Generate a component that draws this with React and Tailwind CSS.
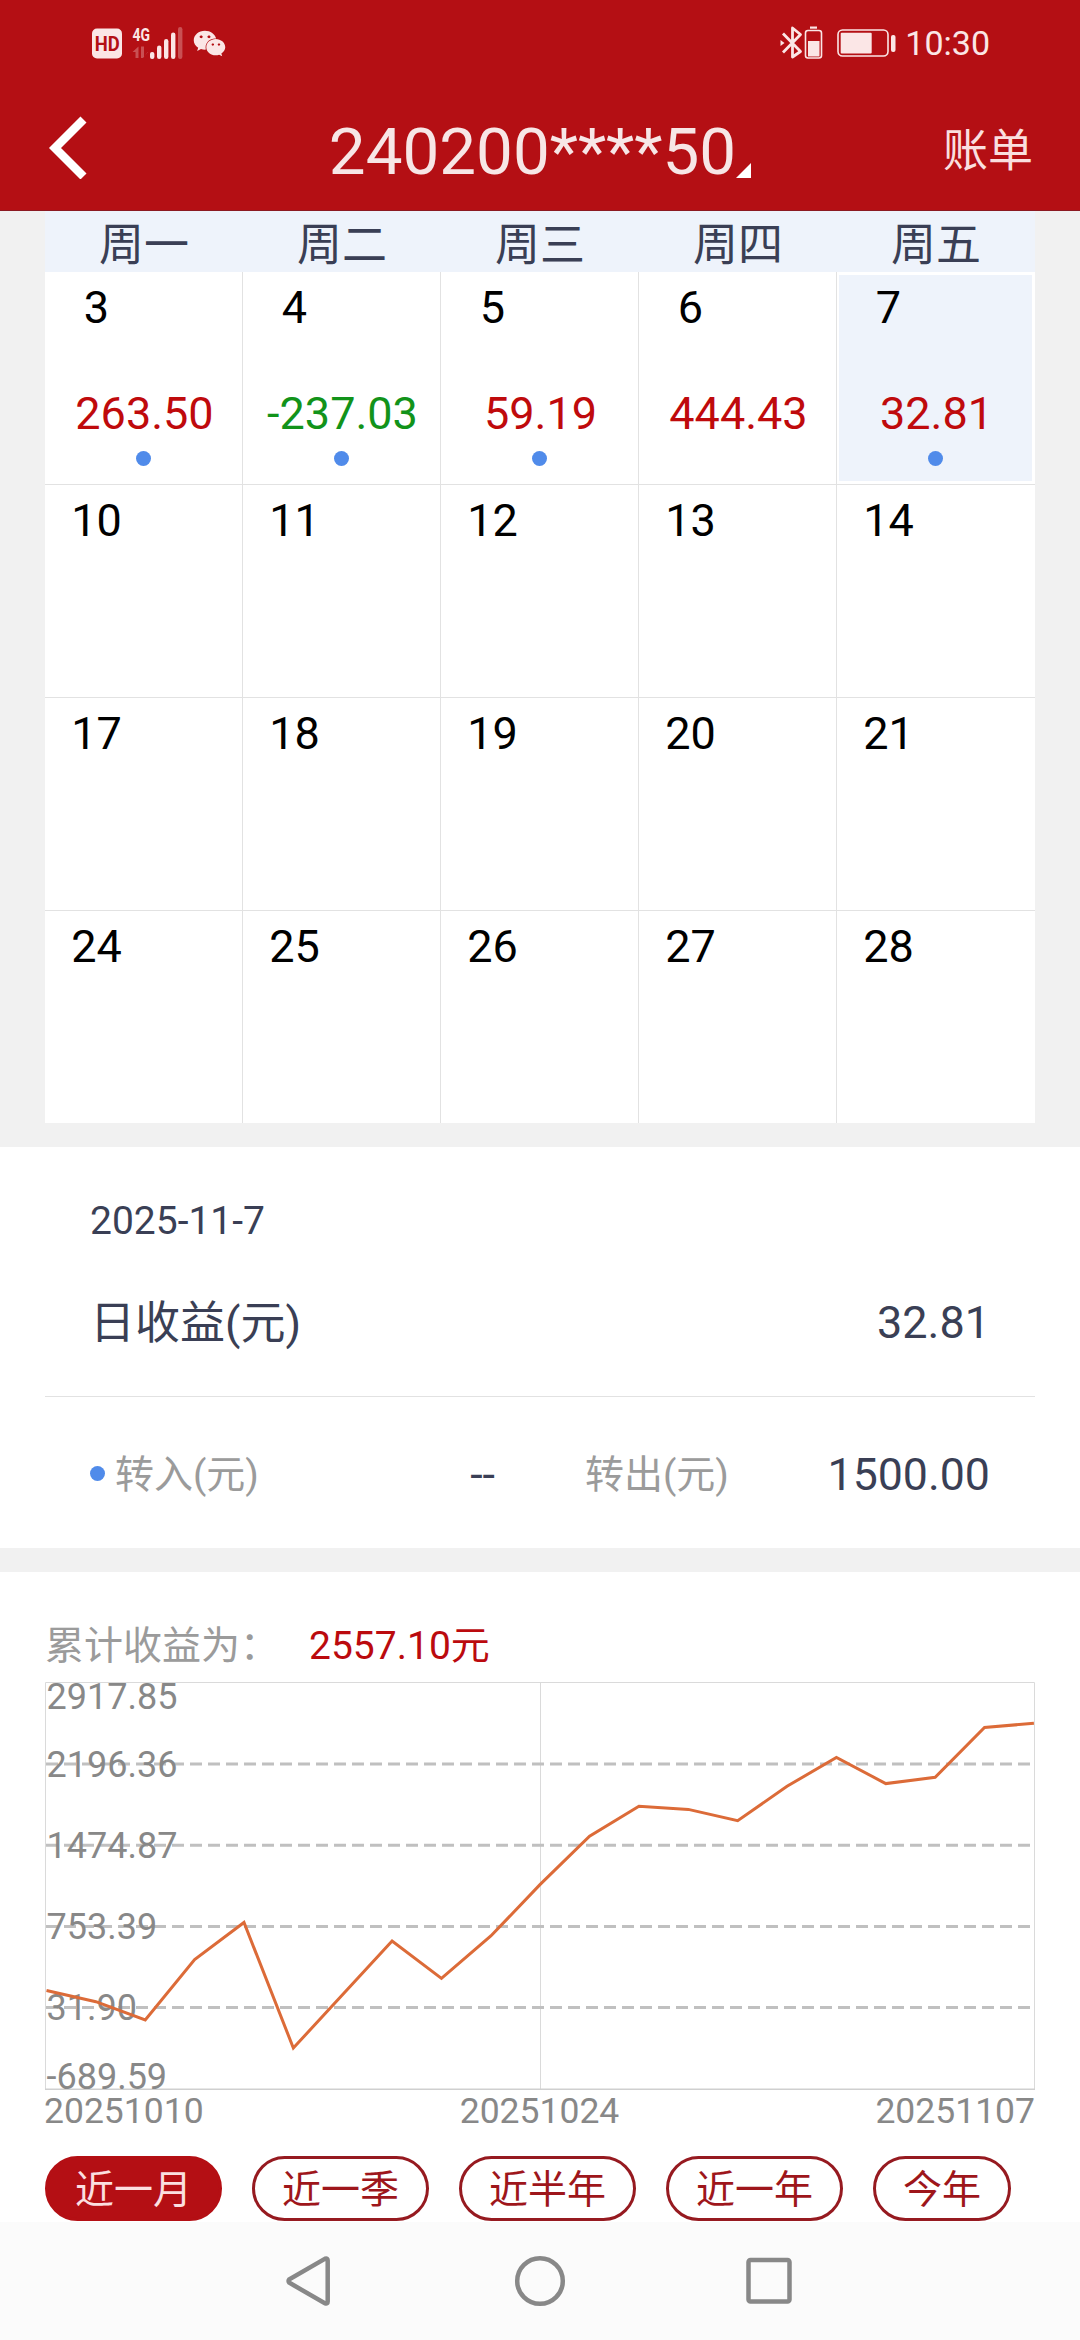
import React, { useState } from 'react';
import { FaWeixin } from 'react-icons/fa';

const weekdays = ['周一', '周二', '周三', '周四', '周五'];

const weeks = [
  [
    { day: 3, profit: '263.50', moved: true },
    { day: 4, profit: '-237.03', moved: true },
    { day: 5, profit: '59.19', moved: true },
    { day: 6, profit: '444.43' },
    { day: 7, profit: '32.81', moved: true },
  ],
  [{ day: 10 }, { day: 11 }, { day: 12 }, { day: 13 }, { day: 14 }],
  [{ day: 17 }, { day: 18 }, { day: 19 }, { day: 20 }, { day: 21 }],
  [{ day: 24 }, { day: 25 }, { day: 26 }, { day: 27 }, { day: 28 }],
];

const ranges = ['近一月', '近一季', '近半年', '近一年', '今年'];

// baseline y of every axis label inside the chart
const axisLabels = [
  { text: '2917.85', y: 27 },
  { text: '2196.36', y: 94.5 },
  { text: '1474.87', y: 176 },
  { text: '753.39', y: 257 },
  { text: '31.90', y: 338 },
  { text: '-689.59', y: 407 },
];

const gridLines = [82, 163.3, 244.5, 325.5];

const profitLine = [
  308.5, 319.7, 338, 277.5, 240.5, 366, 312.5, 259, 296.4, 254, 202.4,
  154.2, 124.3, 127.4, 138.7, 104.3, 75.4, 101.6, 95.3, 45.4, 41.3,
];

const StatusBar = () => (
  <div className="flex h-[84px] items-start justify-between pr-[91px] pl-[92px] text-[#fbe6e6]">
    <div className="flex pt-[26px]">
      <svg className="overflow-visible" width="92" height="34" viewBox="0 0 92 34" fill="currentColor">
        <rect x="0" y="2.5" width="30" height="30" rx="5" />
        <text
          x="2.8"
          y="24.6"
          fontSize="20"
          fontWeight="700"
          fill="#b40f14"
          textLength="25"
          lengthAdjust="spacingAndGlyphs"
        >
          HD
        </text>
        <text
          x="40.5"
          y="15.4"
          fontSize="19"
          fontWeight="700"
          textLength="17.5"
          lengthAdjust="spacingAndGlyphs"
        >
          4G
        </text>
        <g opacity="0.3">
          <path d="M40.5 26 L46.5 20.5 V32 H43.5 V26 Z" />
          <path d="M55.5 26 L52 31 V20.5 H49 V32 H51 L56 26 Z" />
          <rect x="86" y="1" width="4.4" height="32" rx="2.2" />
        </g>
        <rect x="58" y="26" width="4.4" height="7" rx="2" />
        <rect x="65" y="19.5" width="4.4" height="13.5" rx="2.2" />
        <rect x="72" y="13" width="4.4" height="20" rx="2.2" />
        <rect x="79" y="6.5" width="4.4" height="26.5" rx="2.2" />
      </svg>
      <FaWeixin className="mt-0.5 ml-[9px] h-[31px] w-[33px]" />
    </div>
    <div className="flex pt-[25px]">
      <svg width="116" height="36" viewBox="0 0 116 36" fill="none" stroke="currentColor">
        <path d="M3 8.5 L20.5 26.5 L12.5 32 V3 L20.5 9.5 L3 27.5" strokeWidth="2.8" strokeLinejoin="round" />
        <path d="M0.5 15 L4.5 18 L0.5 21 Z" fill="currentColor" stroke="none" />
        <rect x="25.5" y="5.5" width="16" height="27.5" rx="2.5" strokeWidth="1.6" />
        <rect x="28" y="16" width="11.5" height="15.5" fill="currentColor" stroke="none" />
        <rect x="30" y="1.5" width="7" height="2.2" fill="currentColor" stroke="none" />
        <rect x="58" y="5" width="50" height="26" rx="4.5" strokeWidth="1.6" />
        <rect x="60.7" y="7.7" width="31" height="20.8" rx="1" fill="currentColor" stroke="none" />
        <rect x="111" y="10" width="4.5" height="17" rx="2" fill="currentColor" stroke="none" />
      </svg>
      <span className="-mr-px ml-[9px] text-[34px] leading-[37px]">10:30</span>
    </div>
  </div>
);

const Header = () => (
  <header className="h-[211px] border-b border-[#8c1a22] bg-[#b40f14]">
    <StatusBar />
    <div className="grid h-[126px] grid-cols-[1fr_auto_1fr] items-center pr-[48px] pl-[48px]">
      <button className="w-10">
        <svg width="40" height="64" viewBox="0 0 40 64" fill="none" stroke="#fff" strokeWidth="8.5">
          <path d="M35.5 4.5 L7 33 L35.5 61.5" />
        </svg>
      </button>
      <h1 className="flex items-end pt-[9px] text-[65.5px] leading-[72px] text-[#f7e6e6]">
        240200****50
        <svg className="mb-[10px]" width="15" height="15" viewBox="0 0 15 15" fill="#fff">
          <path d="M15 0 V15 H0 Z" />
        </svg>
      </h1>
      <button className="-mr-px justify-self-end pt-[9px] text-[45px] leading-[72px] text-[#fadfdf]">账单</button>
    </div>
  </header>
);

const DayCell = ({ cell, selected, onSelect }) => (
  <div
    onClick={onSelect}
    className={`flex flex-col items-center border-white ${
      selected ? 'bg-[#eef3fb] border-t-3 border-r-3 border-b-3 border-l-2 h-[212px]' : 'h-full'
    }`}
  >
    <div
      className={`w-[103px] self-start text-center text-[45px] leading-[71px] text-black ${
        selected ? '-mt-[3px] -ml-[2px]' : ''
      }`}
    >
      {cell.day}
    </div>
    {cell.profit && (
      <div
        className={`mt-[35px] pl-[2px] text-[45px] leading-[71px] ${
          cell.profit.startsWith('-') ? 'text-[#12931a]' : 'text-[#bf0a0c]'
        }`}
      >
        {cell.profit}
      </div>
    )}
    {cell.moved && <div className="mt-[2px] size-[15px] rounded-full bg-[#508bea]" />}
  </div>
);

const Calendar = () => {
  const [selectedDay, setSelectedDay] = useState(7);

  return (
    <section className="h-[936px] bg-[#f1f1f1] px-[45px]">
      <div className="grid h-[61px] grid-cols-5 bg-[#eef3fb] text-center text-[45px] leading-[70px] text-[#3a3f55]">
        {weekdays.map((name) => (
          <div key={name}>{name}</div>
        ))}
      </div>
      <div className="h-[851px] overflow-hidden bg-white">
        {weeks.map((week) => (
          <div key={week[0].day} className="grid h-[213px] grid-cols-5 border-b border-[#e2e2e2]">
            {week.map((cell) => (
              <div key={cell.day} className="border-r border-[#e2e2e2] last:border-r-0">
                <DayCell
                  cell={cell}
                  selected={cell.day === selectedDay}
                  onSelect={() => setSelectedDay(cell.day)}
                />
              </div>
            ))}
          </div>
        ))}
      </div>
    </section>
  );
};

const DayDetail = () => (
  <section className="h-[401px] bg-white px-[45px] pt-[44px] text-[#3a3f55]">
    <div className="px-[45px] text-[39px] leading-[60px]">2025-11-7</div>
    <div className="mt-[42px] flex justify-between px-[45px] text-[45px] leading-[60px]">
      <span className="pt-px">日收益(元)</span>
      <span>32.81</span>
    </div>
    <div className="mt-[42px] border-t border-[#e2e2e2]" />
    <div className="mt-[48px] flex px-[45px] leading-[60px]">
      <div className="flex w-[405px] items-center justify-between">
        <span className="flex items-center text-[39px] text-[#9b9b9b]">
          <i className="mr-[10px] mb-1 size-[15px] rounded-full bg-[#508bea]" />
          转入(元)
        </span>
        <span className="text-[45px]">--</span>
      </div>
      <div className="ml-[90px] flex flex-1 items-center justify-between">
        <span className="text-[39px] text-[#9b9b9b]">转出(元)</span>
        <span className="text-[44.7px]">1500.00</span>
      </div>
    </div>
  </section>
);

const ProfitChart = () => {
  const points = profitLine.map((y, i) => `${1.5 + i * 49.37},${y}`).join(' ');

  return (
    <svg className="mt-1.5 block overflow-visible" width="990" height="408" viewBox="0 0 990 408" fill="none">
      <path d="M0.5 408 V0.5 H989.5 V408 M495.5 0 V408" stroke="#dadada" />
      <path d="M0 407.3 H990" stroke="#cfcfcf" strokeWidth="1.4" />
      {gridLines.map((y) => (
        <path key={y} d={`M1 ${y} H988`} stroke="#c0c0c0" strokeWidth="3" strokeDasharray="12 6" />
      ))}
      {axisLabels.map((label) => (
        <text key={label.text} x="1.5" y={label.y} fontSize="36" fill="#888">
          {label.text}
        </text>
      ))}
      <polyline points={points} stroke="#dc6b38" strokeWidth="3" />
    </svg>
  );
};

const Summary = () => {
  const [range, setRange] = useState('近一月');

  return (
    <section className="h-[650px] overflow-hidden bg-white px-[45px] pt-[44px]">
      <div className="flex text-[39px] leading-[60px]">
        <span className="w-[264px] text-[#9b9b9b]">累计收益为：</span>
        <span className="text-[#bb0a0e]">2557.10元</span>
      </div>
      <ProfitChart />
      <div className="flex justify-between text-[35.5px] leading-[42px] text-[#888]">
        <span className="-ml-px">20251010</span>
        <span>20251024</span>
        <span>20251107</span>
      </div>
      <div className="mt-6 flex gap-[30px]">
        {ranges.map((name) => (
          <button
            key={name}
            onClick={() => setRange(name)}
            className={`h-[65px] rounded-full border-3 px-[27px] pt-px text-[39px] leading-[60px] ${
              range === name
                ? 'border-[#b40f14] bg-[#b40f14] text-[#fbdfe0]'
                : 'border-[#961a20] bg-white text-[#9e161b]'
            }`}
          >
            {name}
          </button>
        ))}
      </div>
    </section>
  );
};

const NavBar = () => (
  <nav className="flex h-[118px] justify-center bg-[#fbfbfb] pt-[33px]">
    <svg width="510" height="52" viewBox="0 0 510 52" fill="none" stroke="#888" strokeWidth="4.5">
      <path d="M40.2 3.6 L4.4 24.2 Q2.6 26 4.4 27.8 L40.2 48.4 Q42.7 49.2 42.7 46.5 V5.5 Q42.7 2.8 40.2 3.6 Z" />
      <circle cx="255" cy="26" r="22.8" />
      <rect x="463.5" y="5" width="41" height="41.5" rx="2" />
    </svg>
  </nav>
);

const App = () => {
  return (
    <div className="h-[2340px] w-[1080px] overflow-hidden bg-[#f1f1f1] font-[Roboto,'Noto_Sans_CJK_SC',sans-serif]">
      <Header />
      <Calendar />
      <DayDetail />
      <div className="h-6" />
      <Summary />
      <NavBar />
    </div>
  );
};

export default App;
